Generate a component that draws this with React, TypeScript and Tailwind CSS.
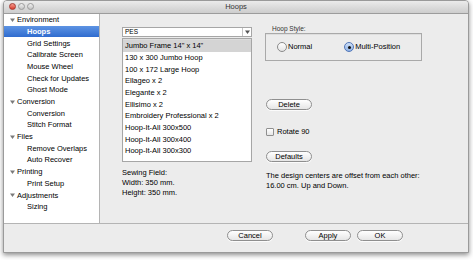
import React from 'react';

const font = { fontFamily: '"Liberation Sans", Arial, sans-serif' };

const sections: { title: string; items: string[] }[] = [
  { title: 'Environment', items: ['Hoops', 'Grid Settings', 'Calibrate Screen', 'Mouse Wheel', 'Check for Updates', 'Ghost Mode'] },
  { title: 'Conversion', items: ['Conversion', 'Stitch Format'] },
  { title: 'Files', items: ['Remove Overlaps', 'Auto Recover'] },
  { title: 'Printing', items: ['Print Setup'] },
  { title: 'Adjustments', items: ['Sizing'] },
];

const hoops = [
  'Jumbo Frame 14" x 14"',
  '130 x 300 Jumbo Hoop',
  '100 x 172 Large Hoop',
  'Ellageo x 2',
  'Elegante x 2',
  'Ellisimo x 2',
  'Embroidery Professional x 2',
  'Hoop-It-All 300x500',
  'Hoop-It-All 300x400',
  'Hoop-It-All 300x300',
];

const Triangle: React.FC<{ color: string }> = ({ color }) => (
  <svg width="5" height="4" viewBox="0 0 5 4" className="shrink-0">
    <path d="M0 0.5 L5 0.5 L2.5 4 Z" fill={color} />
  </svg>
);

const AquaButton: React.FC<{ label: string; className?: string }> = ({ label, className = '' }) => (
  <button className={`h-[11px] w-[46px] rounded-full border border-[#8f8f8f] bg-gradient-to-b from-white to-[#e6e6e6] text-[7.5px] leading-none text-black shadow-[0_1px_0_rgba(255,255,255,0.8)] ${className}`}>
    {label}
  </button>
);

const Radio: React.FC<{ checked?: boolean }> = ({ checked }) => (
  <span className={`flex h-[10px] w-[10px] items-center justify-center rounded-full border ${checked ? 'border-[#5176b8] bg-gradient-to-b from-[#cfe0f7] to-[#8fb2e6]' : 'border-[#8a8a8a] bg-gradient-to-b from-white to-[#e4e4e4]'}`}>
    {checked && <span className="h-[3px] w-[3px] rounded-full bg-[#111]" />}
  </span>
);

export default function App() {
  return (
    <div className="h-[260px] w-[473px] bg-white pl-[3px]" style={font}>
      <div className="flex h-[253px] w-[466px] flex-col overflow-hidden rounded-t-[4px] border border-[#9a9a9a] bg-[#ececec] shadow-[0_2px_5px_rgba(0,0,0,0.45)]">
        {/* Title bar */}
        <div className="relative flex h-[13px] shrink-0 items-center justify-center border-b border-[#9c9c9c] bg-gradient-to-b from-[#ebebeb] to-[#cdcdcd]">
          <div className="absolute left-[5px] top-[2px] flex gap-[2px]">
            <span className="h-[7px] w-[7px] rounded-full border border-[#a63a32] bg-gradient-to-b from-[#f59a8f] to-[#d8392c]" />
            <span className="h-[7px] w-[7px] rounded-full border border-[#9a9a9a] bg-gradient-to-b from-[#f0f0f0] to-[#c4c4c4]" />
            <span className="h-[7px] w-[7px] rounded-full border border-[#9a9a9a] bg-gradient-to-b from-[#f0f0f0] to-[#c4c4c4]" />
          </div>
          <span className="text-[7.5px] text-[#333]">Hoops</span>
        </div>

        {/* Main */}
        <div className="flex h-[210px] shrink-0 border-b border-[#b4b4b4]">
          {/* Sidebar */}
          <div className="w-[96px] shrink-0 border-r border-[#b4b4b4] bg-white">
            {sections.map((s) => (
              <div key={s.title}>
                <div className="flex h-[11.7px] items-center gap-[2px] pl-[6px] text-[7.5px] text-black">
                  <Triangle color="#7a7a7a" />
                  {s.title}
                </div>
                {s.items.map((item) => {
                  const sel = item === 'Hoops';
                  return (
                    <div
                      key={item}
                      className={`flex h-[11.7px] items-center pl-[23px] text-[7.5px] ${sel ? 'bg-gradient-to-b from-[#5d93e3] to-[#2f6ccf] font-bold text-white' : 'text-black'}`}
                    >
                      {item}
                    </div>
                  );
                })}
              </div>
            ))}
          </div>

          {/* Content */}
          <div className="flex flex-1 pl-[22px] pt-[13px]">
            <div className="w-[130px] shrink-0">
              <div className="flex h-[10px] border border-[#a6a6a6] bg-white">
                <span className="flex-1 pl-[2px] text-[6.5px] leading-[8px] text-black">PES</span>
                <span className="flex w-[9px] items-center justify-center border-l border-[#c4c4c4]">
                  <Triangle color="#555" />
                </span>
              </div>
              <div className="mt-[1px] h-[124px] border border-[#a6a6a6] bg-white pt-[1px] shadow-[inset_0_1px_1px_rgba(0,0,0,0.15)]">
                {hoops.map((h, i) => (
                  <div key={h} className={`flex h-[11.7px] items-center pl-[2px] text-[7.5px] text-black ${i === 0 ? 'bg-[#d4d4d4]' : ''}`}>
                    {h}
                  </div>
                ))}
              </div>
              <div className="mt-[6px] text-[7.5px] leading-[10px] text-black">
                <div>Sewing Field:</div>
                <div>Width: 350 mm.</div>
                <div>Height: 350 mm.</div>
              </div>
            </div>

            <div className="ml-[13px] flex flex-col items-start">
              <div className="-mt-[2px] ml-[7px] h-[8px] text-[6.5px] leading-[8px] text-[#333]">Hoop Style:</div>
              <div className="flex h-[28px] w-[157px] items-center border border-[#a9a9a9] pl-[11px] shadow-[inset_0_1px_0_rgba(0,0,0,0.06)]">
                <Radio />
                <span className="ml-[1px] text-[7.5px] text-black">Normal</span>
                <span className="ml-[32px]"><Radio checked /></span>
                <span className="ml-[1px] text-[7.5px] text-black">Multi-Position</span>
              </div>
              <AquaButton label="Delete" className="ml-[1px] mt-[38px]" />
              <div className="ml-[1px] mt-[18px] flex items-center">
                <span className="h-[8px] w-[8px] rounded-[1px] border border-[#8f8f8f] bg-gradient-to-b from-white to-[#e6e6e6]" />
                <span className="ml-[3px] text-[7.5px] leading-none text-black">Rotate 90</span>
              </div>
              <AquaButton label="Defaults" className="ml-[1px] mt-[15px]" />
              <div className="ml-[1px] mt-[9px] text-[7.5px] leading-[10px] text-black">
                <div>The design centers are offset from each other:</div>
                <div>16.00 cm. Up and Down.</div>
              </div>
            </div>
          </div>
        </div>

        {/* Bottom bar */}
        <div className="flex flex-1 justify-end pr-[65px] pt-[6px]">
          <AquaButton label="Cancel" className="mr-[32px]" />
          <AquaButton label="Apply" className="mr-[6px]" />
          <AquaButton label="OK" />
        </div>
      </div>
    </div>
  );
}
